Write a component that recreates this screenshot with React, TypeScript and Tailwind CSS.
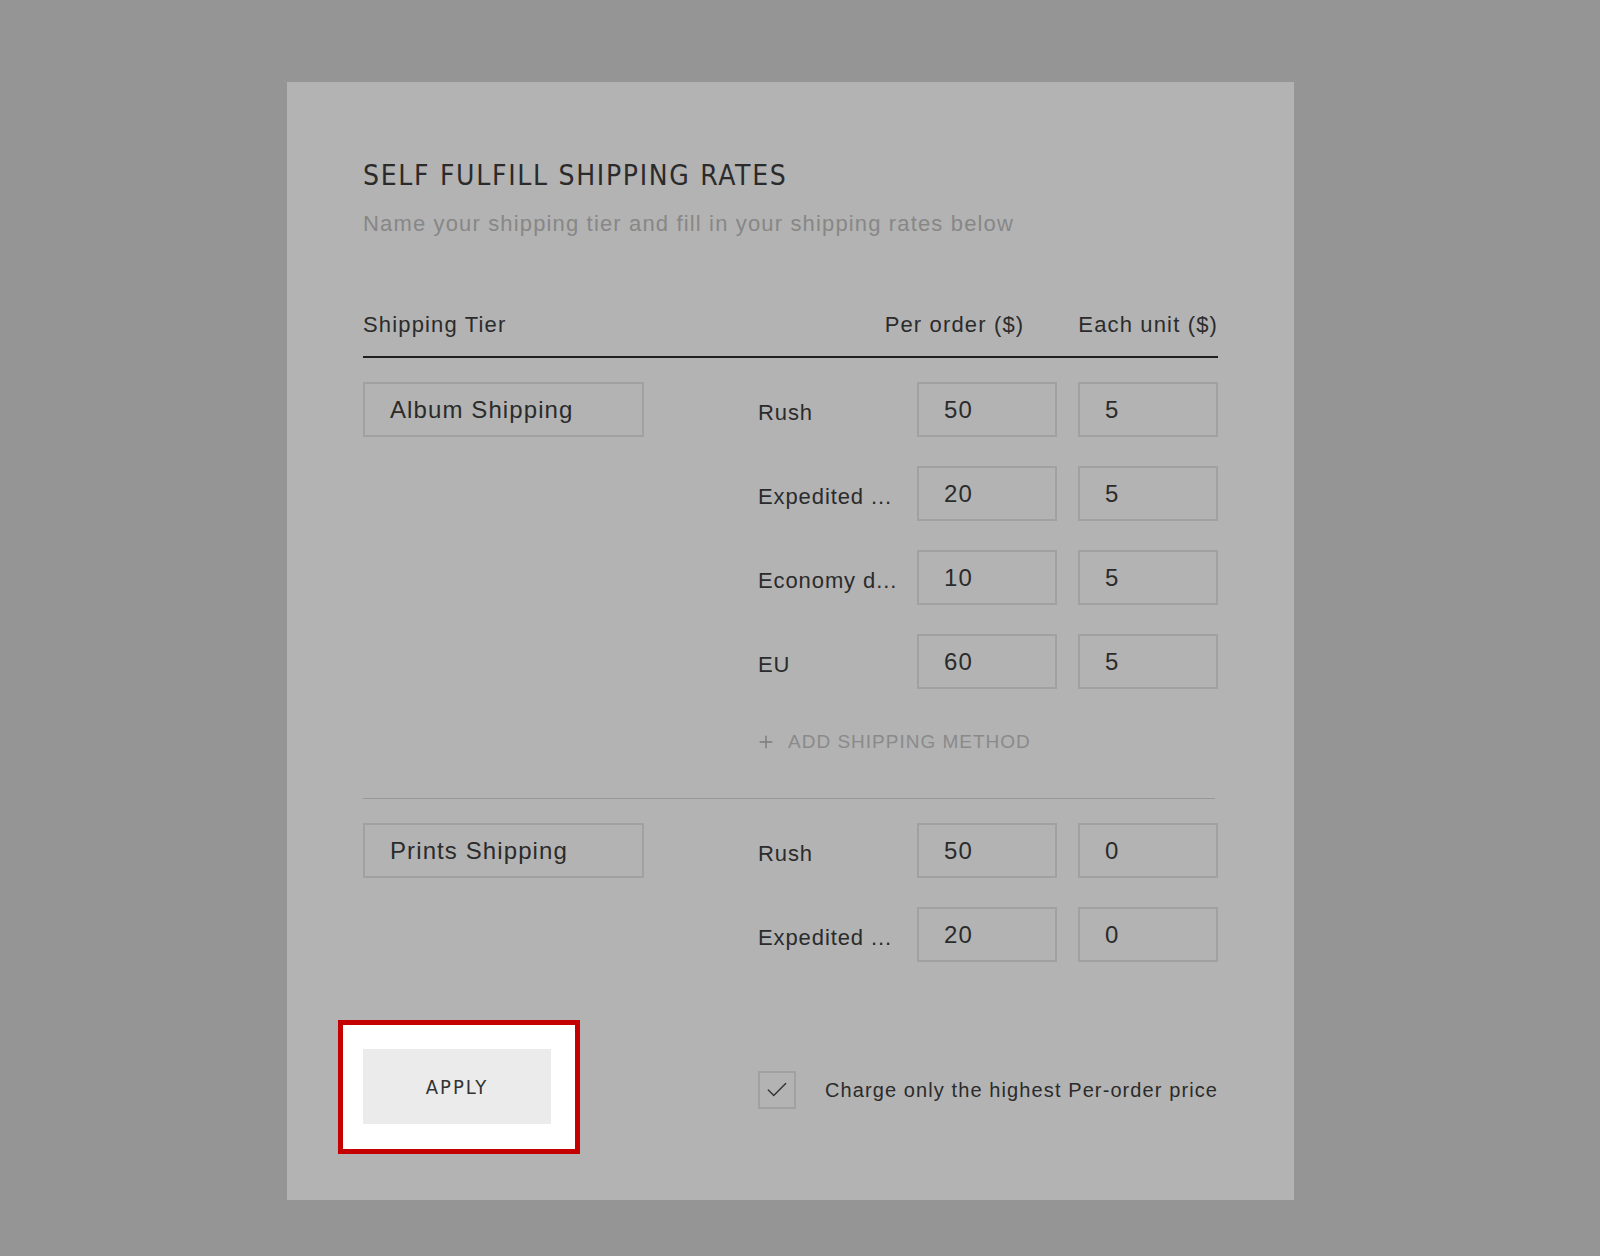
import { Plus, Check } from 'lucide-react'

type Rate = { label: string; perOrder: string; eachUnit: string }

const albumRates: Rate[] = [
  { label: 'Rush', perOrder: '50', eachUnit: '5' },
  { label: 'Expedited ...', perOrder: '20', eachUnit: '5' },
  { label: 'Economy d...', perOrder: '10', eachUnit: '5' },
  { label: 'EU', perOrder: '60', eachUnit: '5' },
]

const printRates: Rate[] = [
  { label: 'Rush', perOrder: '50', eachUnit: '0' },
  { label: 'Expedited ...', perOrder: '20', eachUnit: '0' },
]

function Field({ value, width }: { value: string; width: string }) {
  return (
    <input
      readOnly
      value={value}
      className={`${width} h-[55px] border-2 border-[#a1a1a1] bg-transparent px-[25px] text-[24px] tracking-[1.1px] text-[#2b2b2b] outline-none`}
    />
  )
}

function TierSection({
  name,
  rates,
  showAdd,
  className,
}: {
  name: string
  rates: Rate[]
  showAdd?: boolean
  className?: string
}) {
  return (
    <div className={`flex ${className ?? ''}`}>
      <div className="w-[395px] shrink-0">
        <Field value={name} width="w-[281px]" />
      </div>
      <div className="flex w-[460px] flex-col">
        <div className="flex flex-col gap-[29px]">
          {rates.map((r, i) => (
            <div key={i} className="flex items-center">
              <div className="flex h-[55px] w-[159px] shrink-0 items-center whitespace-nowrap pt-[6px] text-[22px] tracking-[0.9px] text-[#2b2b2b]">
                {r.label}
              </div>
              <Field value={r.perOrder} width="w-[140px]" />
              <div className="ml-[21px]">
                <Field value={r.eachUnit} width="w-[140px]" />
              </div>
            </div>
          ))}
        </div>
        {showAdd && (
          <button className="mt-[41px] flex items-center gap-[12px] text-left text-[19px] leading-[24px] tracking-[1px] text-[#8a8a8a]">
            <Plus className="h-[20px] w-[20px] -ml-[2px] text-[#7c7c7c]" strokeWidth={1.7} />
            ADD SHIPPING METHOD
          </button>
        )}
      </div>
    </div>
  )
}

export default function App() {
  return (
    <div className="min-h-[1256px] w-full bg-[#959595] pl-[287px] pt-[82px] font-['Liberation_Sans',Arial,sans-serif]">
      <div className="flex w-[1007px] flex-col bg-[#b3b3b3] px-[76px] pb-[76px] pt-[76px]">
        <h1 className="font-['Liberation_Sans_Narrow','DejaVu_Sans_Condensed',sans-serif] text-[28px] leading-[36px] tracking-[1.7px] text-[#2b2b2b]">
          SELF FULFILL SHIPPING RATES
        </h1>
        <p className="mt-[16px] text-[22px] leading-[28px] tracking-[1.15px] text-[#878787]">
          Name your shipping tier and fill in your shipping rates below
        </p>

        <div className="mt-[73px] flex justify-between border-b-2 border-[#1f1f1f] pb-[17px] text-[22px] leading-[28px] tracking-[1.15px] text-[#2b2b2b]">
          <span>Shipping Tier</span>
          <div className="flex gap-[54px]">
            <span>Per order ($)</span>
            <span>Each unit ($)</span>
          </div>
        </div>

        <TierSection name="Album Shipping" rates={albumRates} showAdd className="mt-[24px]" />

        <div className="mt-[44px] h-px w-[852px] bg-[#979797]" />

        <TierSection name="Prints Shipping" rates={printRates} className="mt-[24px]" />

        <div className="mt-[87px] flex items-start">
          <div className="relative w-[395px] shrink-0">
            <div className="absolute left-[-25px] top-[-29px] h-[134px] w-[242px] border-[5px] border-[#c40000] bg-white" />
            <button className="relative h-[75px] w-[188px] bg-[#ebebeb] font-['Liberation_Sans_Narrow','DejaVu_Sans_Condensed',sans-serif] text-[20px] tracking-[2px] text-[#333]">
              APPLY
            </button>
          </div>
          <label className="mt-[22px] flex items-center gap-[29px] whitespace-nowrap">
            <span className="flex h-[38px] w-[38px] shrink-0 items-center justify-center border-2 border-[#a1a1a1]">
              <Check className="h-[26px] w-[26px] text-[#333]" strokeWidth={1.3} />
            </span>
            <span className="text-[20px] tracking-[1.1px] text-[#2b2b2b]">
              Charge only the highest Per-order price
            </span>
          </label>
        </div>
      </div>
    </div>
  )
}
